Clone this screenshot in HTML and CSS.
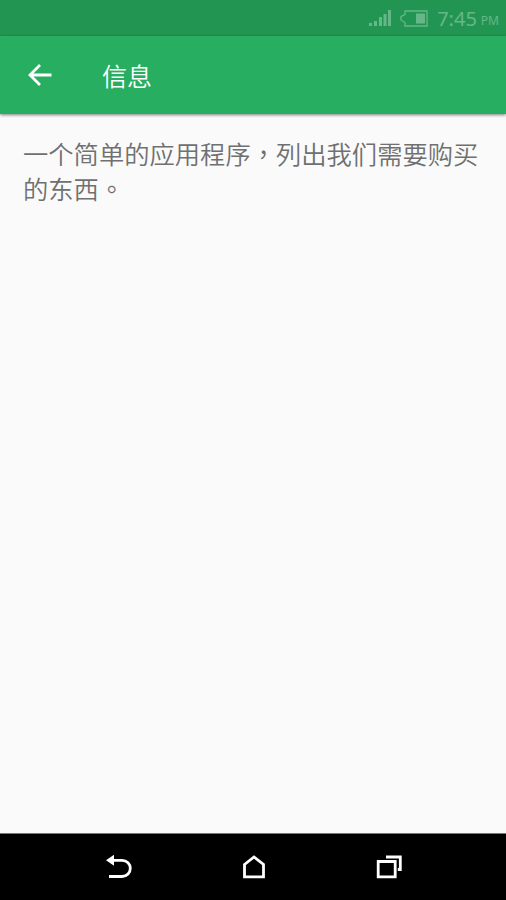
FILE: index.html
```html
<!DOCTYPE html>
<html lang="zh-TW">
<head>
<meta charset="utf-8">
<title>信息</title>
<link rel="stylesheet" href="styles.css">
</head>
<body>
<div class="screen">
  <div class="status-bar">
    <svg class="signal" width="24" height="18" viewBox="0 0 24 18"><path d="M1 14h3v3h-3zM6 12h3v5h-3zM11 8h3v9h-3zM15.500 5h3v12h-3zM20 1h3v16h-3z"/></svg>
    <svg class="battery" width="28" height="17" viewBox="0 0 28 17"><path class="battery-case" d="M5 1h22v15H5v-3.500L1 10V6.500L5 4.500z"/><path d="M16 3.500h9v10h-9z"/></svg>
    <span class="clock">7:45</span><span class="period">PM</span>
  </div>
  <header class="app-bar">
    <svg class="back" width="24" height="24" viewBox="0 0 24 24"><path d="M23.500 12H2M12 2L2 12l10 10"/></svg>
    <h1 class="title">信息</h1>
  </header>
  <main class="content"><p class="description">一个简单的应用程序，列出我们需要购买的东西。</p></main>
  <nav class="nav-bar">
    <svg width="28" height="28" viewBox="0 0 28 28"><path d="M7 7.300h11c5 0 8.300 3.600 8.300 8s-3.300 8.200-8.300 8.200H5"/><path class="arrow-head" d="M2 7.300l8-5.500v11z"/></svg>
    <svg width="28" height="28" viewBox="0 0 28 28"><path d="M4.500 11.500L14 4l9.500 7.500v12.300h-19z"/></svg>
    <svg width="28" height="28" viewBox="0 0 28 28"><path d="M3.200 8.500h17v15.300h-17zM11 4h14.300v12.500h-2.500"/></svg>
  </nav>
</div>
</body>
</html>
```

FILE: styles.css
```css
* { box-sizing: border-box; }
body {
  margin: 0;
  font-family: "Noto Sans", "Noto Sans CJK TC", sans-serif;
}
.screen {
  display: flex;
  flex-direction: column;
  height: 900px;
  background: #fafafa;
}
.status-bar {
  display: flex;
  flex: 0 0 36px;
  align-items: center;
  justify-content: flex-end;
  padding-right: 7px;
  background: #239553;
  color: #66b787;
}
.status-bar svg { fill: currentColor; }
.signal { margin-right: 8px; }
.battery { margin-right: 9px; }
.battery .battery-case { fill: none; stroke: currentColor; stroke-width: 1.3; }
.clock { font-size: 20px; line-height: 32px; margin-top: 2px; }
.period { margin: 5px 0 0 4px; font-size: 12px; }
.app-bar {
  display: flex;
  flex: 0 0 78px;
  align-items: center;
  padding-left: 28px;
  background: #27ae60;
  box-shadow: 0 1px 3px rgba(0, 0, 0, 0.5);
}
.back {
  fill: none;
  stroke: #fff;
  stroke-width: 2.8;
}
.title {
  margin: 0 0 0 50px;
  color: #fff;
  font-family: "Noto Sans CJK TC", sans-serif;
  font-size: 25px;
  font-weight: 350;
  line-height: 36px;
}
.content {
  flex: 1;
  padding: 22px 23px 0;
}
.description {
  margin: 0;
  color: #707070;
  font-family: "Noto Sans CJK TC", sans-serif;
  font-size: 25.3px;
  font-weight: 350;
  line-height: 35px;
}
.nav-bar {
  display: flex;
  flex: 0 0 67px;
  align-items: center;
  justify-content: space-between;
  padding: 0 103px 0 104px;
  border-top: 1px solid #777;
  background: #000;
}
.nav-bar svg {
  fill: none;
  stroke: #fff;
  stroke-width: 2.8;
}
.nav-bar .arrow-head { fill: #fff; stroke: none; }
```
